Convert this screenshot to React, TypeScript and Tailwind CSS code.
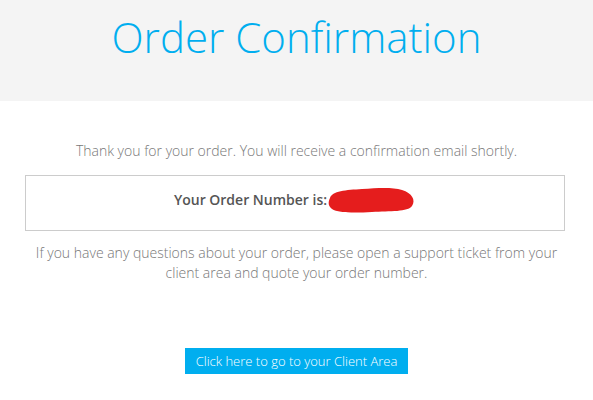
export default function App() {
    return (
        <div className="min-h-[400px] bg-white font-['Open_Sans',sans-serif] text-[#777]">
            {/* Header */}
            <div className="h-[101px] bg-[#f4f4f4] pt-[7px] text-center">
                <h1 className="text-[42px] font-light leading-[60px] text-[#00aeef]">Order Confirmation</h1>
            </div>

            {/* Body */}
            <div className="pt-[40px] text-center text-[14px] font-light">
                <p className="leading-[20px]">Thank you for your order. You will receive a confirmation email shortly.</p>

                <div className="ml-[25px] mr-[28px] mt-[14px] h-[56px] border border-[#ccc] pt-[10px]">
                    <p className="flex items-center justify-center font-semibold leading-[20px] text-[#555]">
                        Your Order Number is:
                        <svg width="90" height="28" viewBox="0 0 90 28" className="-ml-[1px]">
                            <path
                                d="M4 12 C6 5 20 4 36 3 C52 2 66 1 76 4 C86 7 90 14 86 20 C82 26 64 25 46 26 C28 27 12 27 6 23 C2 20 2 16 4 12 Z"
                                fill="#e51d1d"
                            />
                        </svg>
                    </p>
                </div>

                <p className="mx-auto mt-[12px] w-[540px] leading-[20px]">
                    If you have any questions about your order, please open a support ticket from your client area and quote your order number.
                </p>

                <div className="mt-[65px] flex justify-center">
                    <a className="inline-block bg-[#00aeef] px-[11px] py-[3px] text-[13px] leading-[20px] text-white">
                        Click here to go to your Client Area
                    </a>
                </div>
            </div>
        </div>
    );
}
